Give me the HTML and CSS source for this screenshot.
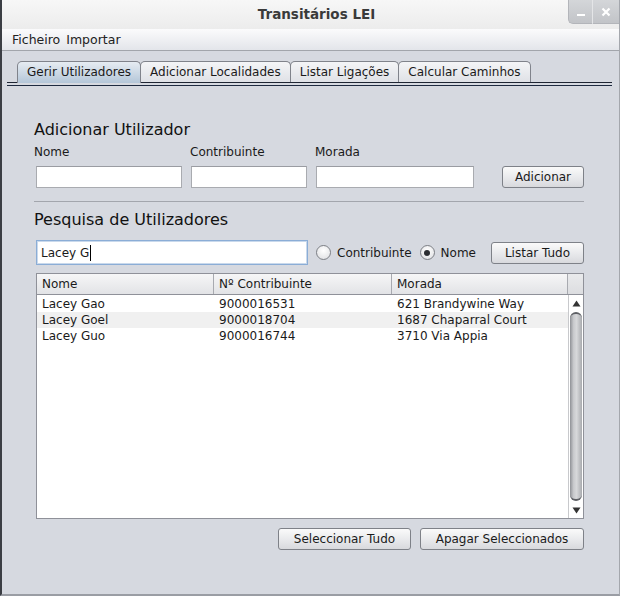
FILE: index.html
```html
<!DOCTYPE html>
<html>
<head>
<meta charset="utf-8">
<link rel="stylesheet" href="styles.css">
</head>
<body>
<div class="window">
  <div class="titlebar">
    <div class="title">Transitários LEI</div>
    <div class="wbtns">
      <div class="wbtn min"><svg width="10" height="10" viewBox="0 0 10 10"><rect x="1" y="7" width="8" height="2" fill="#fff"/></svg></div>
      <div class="wbtn close"><svg width="10" height="10" viewBox="0 0 10 10"><path d="M1.5 1.5 L8.5 8.5 M8.5 1.5 L1.5 8.5" stroke="#fff" stroke-width="2.2"/></svg></div>
    </div>
  </div>
  <div class="menubar"><span class="menu">Ficheiro</span><span class="menu">Importar</span></div>
  <div class="content">
    <div class="tabpane">
      <div class="tabs">
        <div class="tab sel">Gerir Utilizadores</div>
        <div class="tab">Adicionar Localidades</div>
        <div class="tab">Listar Ligações</div>
        <div class="tab">Calcular Caminhos</div>
      </div>
      <div class="tabline"></div>
      <div class="panel">
        <div class="heading h1">Adicionar Utilizador</div>
        <div class="labels">
          <span class="lbl l-nome">Nome</span>
          <span class="lbl l-contrib">Contribuinte</span>
          <span class="lbl">Morada</span>
        </div>
        <div class="addrow">
          <div class="input in-nome"></div>
          <div class="input in-contrib"></div>
          <div class="input in-morada"></div>
          <div class="btn b-add">Adicionar</div>
        </div>
        <div class="sep"></div>
        <div class="heading h2">Pesquisa de Utilizadores</div>
        <div class="searchrow">
          <div class="input search">Lacey G<span class="caret"></span></div>
          <div class="radio r1"><span class="rb"></span>Contribuinte</div>
          <div class="radio r2"><span class="rb on"></span>Nome</div>
          <div class="btn b-list">Listar Tudo</div>
        </div>
        <div class="table">
          <div class="thead">
            <div class="th c1">Nome</div>
            <div class="th c2">Nº Contribuinte</div>
            <div class="th c3">Morada</div>
            <div class="th corner"></div>
          </div>
          <div class="tbody">
            <div class="rows">
              <div class="tr"><div class="td c1">Lacey Gao</div><div class="td c2">9000016531</div><div class="td c3">621 Brandywine Way</div></div>
              <div class="tr alt"><div class="td c1">Lacey Goel</div><div class="td c2">9000018704</div><div class="td c3">1687 Chaparral Court</div></div>
              <div class="tr"><div class="td c1">Lacey Guo</div><div class="td c2">9000016744</div><div class="td c3">3710 Via Appia</div></div>
            </div>
            <div class="vscroll">
              <div class="arrow"><svg width="9" height="7" viewBox="0 0 9 7"><path d="M4.5 0.5 L8.5 6.5 L0.5 6.5 Z" fill="#333"/></svg></div>
              <div class="thumb"></div>
              <div class="arrow"><svg width="9" height="7" viewBox="0 0 9 7"><path d="M0.5 0.5 L8.5 0.5 L4.5 6.5 Z" fill="#333"/></svg></div>
            </div>
          </div>
        </div>
        <div class="bottombtns">
          <div class="btn b-sel">Seleccionar Tudo</div>
          <div class="btn b-del">Apagar Seleccionados</div>
        </div>
      </div>
    </div>
  </div>
</div>
</body>
</html>
```

FILE: styles.css
```css
* { box-sizing: border-box; }
html, body { margin: 0; padding: 0; }
body {
  width: 620px; height: 596px; overflow: hidden;
  font-family: "DejaVu Sans", sans-serif;
  font-size: 12px; color: #1a1a1a;
  background: #d6d9e0;
}
.window {
  width: 620px; height: 596px;
  display: flex; flex-direction: column;
  border-left: 2px solid #3b3e44;
  border-right: 1px solid #a4a7ad;
  border-bottom: 2px solid #9a9da4;
  background: #d6d9e0;
}
.titlebar {
  height: 29px; flex: none;
  display: flex; align-items: flex-start;
  background: linear-gradient(#f7f7f7, #ececec);
  position: relative;
}
.title {
  flex: 1; text-align: center;
  font-weight: bold; font-size: 13.5px; color: #3a3a3a;
  line-height: 29px; padding-left: 12px;
}
.wbtns { display: flex; position: absolute; right: 0; top: 0; }
.wbtn {
  height: 24px; display: flex; align-items: center; justify-content: center;
  background: linear-gradient(#d4d6d9, #c2c4c8);
}
.wbtn.min { width: 25px; border-bottom-left-radius: 5px; border-right: 1px solid #e4e5e7; border-left: 1px solid #b3b5ba; border-bottom: 1px solid #b3b5ba; }
.wbtn.close { width: 26px; border-bottom: 1px solid #b3b5ba; }
.menubar {
  height: 22px; flex: none;
  display: flex; align-items: center; padding-left: 7px;
  background: linear-gradient(#fbfbfc, #e3e5ea);
  border-bottom: 1px solid #a2a5ab;
  color: #222; font-size: 12.5px;
}
.menu { padding: 0 3px; }
.content { flex: 1; padding: 10px 7px 0 5px; }
.tabpane { display: flex; flex-direction: column; }
.tabs {
  display: flex; padding-left: 10px; height: 22px;
  border-bottom: 1px solid #1e2533;
}
.tab {
  height: 21px; padding: 0 9px; line-height: 20px;
  border: 1px solid #80838b; border-bottom: none;
  border-radius: 5px 5px 0 0;
  background: linear-gradient(#f4f5f7, #dfe1e6);
  color: #1a1a1a; margin-right: -1px;
}
.tab.sel {
  background: linear-gradient(#e6ecf2, #b4c6d8);
  height: 22px;
}
.tabline { height: 1px; margin-top: 2px; background: #1e2a40; }
.panel { padding: 0 0 0 27px; display: flex; flex-direction: column; width: 577px; }
.heading { font-size: 16px; color: #111; line-height: 19px; }
.h1 { margin-top: 34px; }
.labels { display: flex; margin-top: 5px; line-height: 16px; }
.lbl.l-nome { width: 156px; }
.lbl.l-contrib { width: 125px; }
.addrow { display: flex; align-items: center; margin-top: 6px; padding-left: 2px; }
.input {
  height: 22px; background: #fff;
  border: 1px solid #a9abb0;
  border-top-color: #9a9ca2;
}
.in-nome { width: 146px; margin-right: 9px; }
.in-contrib { width: 116px; margin-right: 9px; }
.in-morada { width: 158px; }
.btn {
  height: 22px; padding: 0; line-height: 20px;
  border: 1px solid #7e8188; border-radius: 3px;
  background: linear-gradient(#fafafa, #e6e7ea 60%, #d8d9dd);
  color: #1a1a1a; text-align: center;
}
.b-add { width: 82px; margin-left: auto; }
.sep { height: 1px; background: #a3a6ad; margin-top: 13px; width: 550px; }
.h2 { margin-top: 8px; }
.searchrow { display: flex; align-items: center; margin-top: 11px; padding-left: 2px; }
.search {
  width: 272px; height: 25px; border: 1px solid #8badd6;
  box-shadow: inset 0 0 0 1px #c9d9ec;
  padding-left: 4px; display: flex; align-items: center;
}
.caret { display: inline-block; width: 1px; height: 16px; background: #000; margin-left: 1px; }
.radio { display: flex; align-items: center; }
.r1 { margin-left: 8px; }
.r2 { margin-left: 8px; }
.rb {
  width: 15px; height: 15px; border-radius: 50%;
  border: 1px solid #7c7f85; margin-right: 6px;
  background: radial-gradient(circle at 50% 35%, #ffffff, #dcdde0);
  position: relative;
}
.rb.on::after {
  content: ""; position: absolute; left: 3.5px; top: 3.5px;
  width: 6px; height: 6px; border-radius: 50%; background: #2b2d31;
}
.b-list { margin-left: auto; width: 93px; }
.table {
  margin-top: 8px; margin-left: 2px; width: 548px; height: 246px;
  border: 1px solid #8f9199; background: #fff;
  display: flex; flex-direction: column;
}
.thead {
  display: flex; height: 21px; flex: none;
  background: linear-gradient(#f6f6f7, #e2e3e6);
  border-bottom: 1px solid #8f9199;
}
.th {
  line-height: 20px; padding-left: 5px;
  border-right: 1px solid #a8aab0;
}
.c1 { width: 177px; }
.c2 { width: 178px; }
.c3 { width: 176px; }
.th.corner { flex: 1; border-right: none; background: linear-gradient(#e9eaec, #dcdde0); }
.tbody { flex: 1; display: flex; }
.rows { flex: 1; padding-top: 1px; }
.tr { display: flex; height: 16px; line-height: 16px; }
.tr.alt { background: #f0f0f0; }
.td { padding-left: 5px; white-space: nowrap; }
.vscroll {
  width: 16px; display: flex; flex-direction: column;
  background: #fff; border-left: 1px solid #c8c9cc;
}
.arrow { height: 16px; display: flex; align-items: center; justify-content: center; flex: none; }
.thumb {
  flex: 1; margin: 1px 1px;
  border-radius: 7px;
  background: linear-gradient(90deg, #8f9196, #c9cacd 30%, #d7d8da 55%, #a9abaf);
  border-top: 2px solid #5e6065; border-bottom: 2px solid #5e6065;
}
.bottombtns { display: flex; justify-content: flex-end; margin-top: 9px; width: 550px; gap: 9px; }
.b-sel { width: 133px; }
.b-del { width: 164px; }
```
